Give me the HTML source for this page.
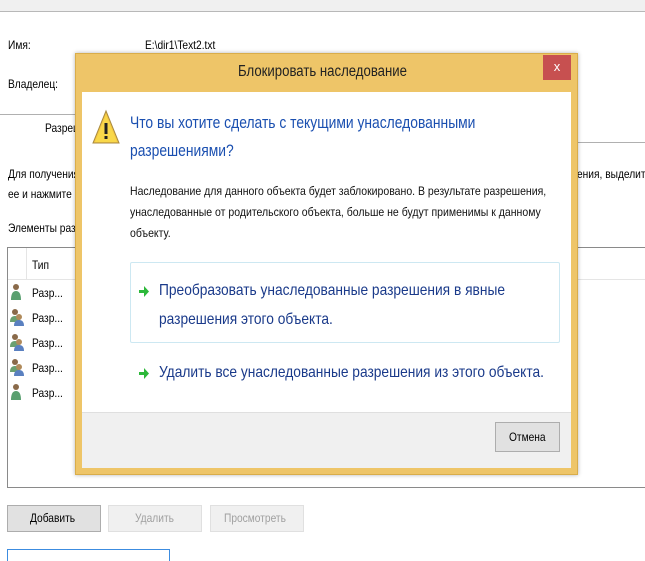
<!DOCTYPE html>
<html><head><meta charset="utf-8"><style>
body{margin:0;width:645px;height:557px;overflow:hidden;background:#fff;font-family:"Liberation Sans",sans-serif;position:relative;color:#000}
.a{position:absolute;white-space:nowrap;transform-origin:0 0;transform:scaleX(0.85)}
.s{font-size:12px}
.b{position:absolute;box-sizing:border-box}
.ic{position:absolute;width:12px;height:17px}
</style></head><body>
<div class="b" style="left:0;top:0;width:645px;height:12px;background:#f0f0f0;border-bottom:1px solid #b8b8b8"></div>
<div class="a s" style="left:8px;top:38px">Имя:</div>
<div class="a s" style="left:145px;top:38px">E:\dir1\Text2.txt</div>
<div class="a s" style="left:8px;top:77px">Владелец:</div>
<div class="b" style="left:0;top:114px;width:80px;height:1px;background:#b0b0b0"></div>
<div class="a s" style="left:45px;top:121px">Разрешения</div>
<div class="b" style="left:575px;top:142px;width:70px;height:1px;background:#b0b0b0"></div>
<div class="a s" style="left:8px;top:167px">Для получения</div>
<div class="a s" style="left:8px;top:187px">ее и нажмите</div>
<div class="a s" style="left:577px;top:167px">ения, выделит</div>
<div class="a s" style="left:8px;top:221px">Элементы разрешений</div>
<div class="b" style="left:7px;top:247px;width:640px;height:241px;border:1px solid #8a8a8a"></div>
<div class="b" style="left:8px;top:248px;width:637px;height:32px;border-bottom:1px solid #e5e5e5"></div>
<div class="b" style="left:26px;top:248px;width:1px;height:32px;background:#e5e5e5"></div>
<div class="a s" style="left:32px;top:258px">Тип</div>
<div class="ic" style="left:10px;top:283px"><svg width="12" height="18"><circle cx="6" cy="4" r="3" fill="#8a6a4a"/><path d="M1 17 Q1 8 6 8 Q11 8 11 17Z" fill="#5aa070"/></svg></div>
<div class="ic" style="left:10px;top:308px"><svg width="14" height="18"><circle cx="5" cy="4" r="3" fill="#8a6a4a"/><path d="M0 14 Q0 8 5 8 Q10 8 10 14Z" fill="#6aa070"/><circle cx="9" cy="9" r="3" fill="#b08a5a"/><path d="M4 18 Q4 12 9 12 Q14 12 14 18Z" fill="#5a80c0"/></svg></div>
<div class="ic" style="left:10px;top:333px"><svg width="14" height="18"><circle cx="5" cy="4" r="3" fill="#8a6a4a"/><path d="M0 14 Q0 8 5 8 Q10 8 10 14Z" fill="#6aa070"/><circle cx="9" cy="9" r="3" fill="#b08a5a"/><path d="M4 18 Q4 12 9 12 Q14 12 14 18Z" fill="#5a80c0"/></svg></div>
<div class="ic" style="left:10px;top:358px"><svg width="14" height="18"><circle cx="5" cy="4" r="3" fill="#8a6a4a"/><path d="M0 14 Q0 8 5 8 Q10 8 10 14Z" fill="#6aa070"/><circle cx="9" cy="9" r="3" fill="#b08a5a"/><path d="M4 18 Q4 12 9 12 Q14 12 14 18Z" fill="#5a80c0"/></svg></div>
<div class="ic" style="left:10px;top:383px"><svg width="12" height="18"><circle cx="6" cy="4" r="3" fill="#8a6a4a"/><path d="M1 17 Q1 8 6 8 Q11 8 11 17Z" fill="#5aa070"/></svg></div>
<div class="a s" style="left:32px;top:286px">Разр...</div>
<div class="a s" style="left:32px;top:311px">Разр...</div>
<div class="a s" style="left:32px;top:336px">Разр...</div>
<div class="a s" style="left:32px;top:361px">Разр...</div>
<div class="a s" style="left:32px;top:386px">Разр...</div>
<div class="b" style="left:7px;top:505px;width:94px;height:27px;background:#e1e1e1;border:1px solid #adadad"></div>
<div class="a s" style="left:30px;top:511px">Добавить</div>
<div class="b" style="left:108px;top:505px;width:94px;height:27px;background:#f0f0f0;border:1px solid #e0e0e0"></div>
<div class="a s" style="left:135px;top:511px;color:#a0a0a0">Удалить</div>
<div class="b" style="left:210px;top:505px;width:94px;height:27px;background:#f0f0f0;border:1px solid #e0e0e0"></div>
<div class="a s" style="left:224px;top:511px;color:#a0a0a0">Просмотреть</div>
<div class="b" style="left:7px;top:549px;width:163px;height:12px;border:1px solid #3c8ce0;border-bottom:none"></div>

<div class="b" style="left:75px;top:53px;width:503px;height:422px;background:#eec568;border:1px solid #d9ad4a;box-shadow:0 0 4px rgba(0,0,0,.3)"></div>
<div class="a" style="left:238px;top:63px;font-size:15.5px;color:#222">Блокировать наследование</div>
<div class="b" style="left:543px;top:55px;width:28px;height:25px;background:#c75050;color:#fff;font-size:13px;text-align:center;line-height:24px">x</div>
<div class="b" style="left:82px;top:92px;width:489px;height:376px;background:#fff"></div>
<div class="b" style="left:82px;top:412px;width:489px;height:56px;background:#f0f0f0;border-top:1px solid #dfdfdf"></div>
<svg style="position:absolute;left:91px;top:109px" width="30" height="38"><path d="M15 2 L28 34 L2 34Z" fill="#f5c842" stroke="#a88a40" stroke-width="1"/><path d="M15 6 L26 33 L4 33Z" fill="#f9d84a"/><rect x="13.5" y="14" width="3" height="11" fill="#222"/><rect x="13.5" y="27" width="3" height="3" fill="#222"/></svg>
<div class="a" style="left:130px;top:114px;font-size:16.5px;color:#1a4fb0;transform:scaleX(0.84)">Что вы хотите сделать с текущими унаследованными</div>
<div class="a" style="left:130px;top:142px;font-size:16.5px;color:#1a4fb0;transform:scaleX(0.84)">разрешениями?</div>
<div class="a s" style="left:130px;top:184px;color:#111;transform:scaleX(0.875)">Наследование для данного объекта будет заблокировано. В результате разрешения,</div>
<div class="a s" style="left:130px;top:205px;color:#111;transform:scaleX(0.875)">унаследованные от родительского объекта, больше не будут применимы к данному</div>
<div class="a s" style="left:130px;top:226px;color:#111;transform:scaleX(0.875)">объекту.</div>
<div class="b" style="left:130px;top:262px;width:430px;height:81px;border:1px solid #cde8f2;border-radius:2px"></div>
<svg style="position:absolute;left:138px;top:285px" width="12" height="13"><path d="M1 5 H6 V1 L11 6.5 L6 12 V8 H1Z" fill="#2db83a"/></svg>
<div class="a" style="left:159px;top:282px;font-size:16px;color:#1a3a8a;transform:scaleX(0.86)">Преобразовать унаследованные разрешения в явные</div>
<div class="a" style="left:159px;top:311px;font-size:16px;color:#1a3a8a;transform:scaleX(0.86)">разрешения этого объекта.</div>
<svg style="position:absolute;left:138px;top:367px" width="12" height="13"><path d="M1 5 H6 V1 L11 6.5 L6 12 V8 H1Z" fill="#2db83a"/></svg>
<div class="a" style="left:159px;top:364px;font-size:16px;color:#1a3a8a;transform:scaleX(0.86)">Удалить все унаследованные разрешения из этого объекта.</div>
<div class="b" style="left:495px;top:422px;width:65px;height:30px;background:#e1e1e1;border:1px solid #adadad"></div>
<div class="a s" style="left:509px;top:430px">Отмена</div>
</body></html>
